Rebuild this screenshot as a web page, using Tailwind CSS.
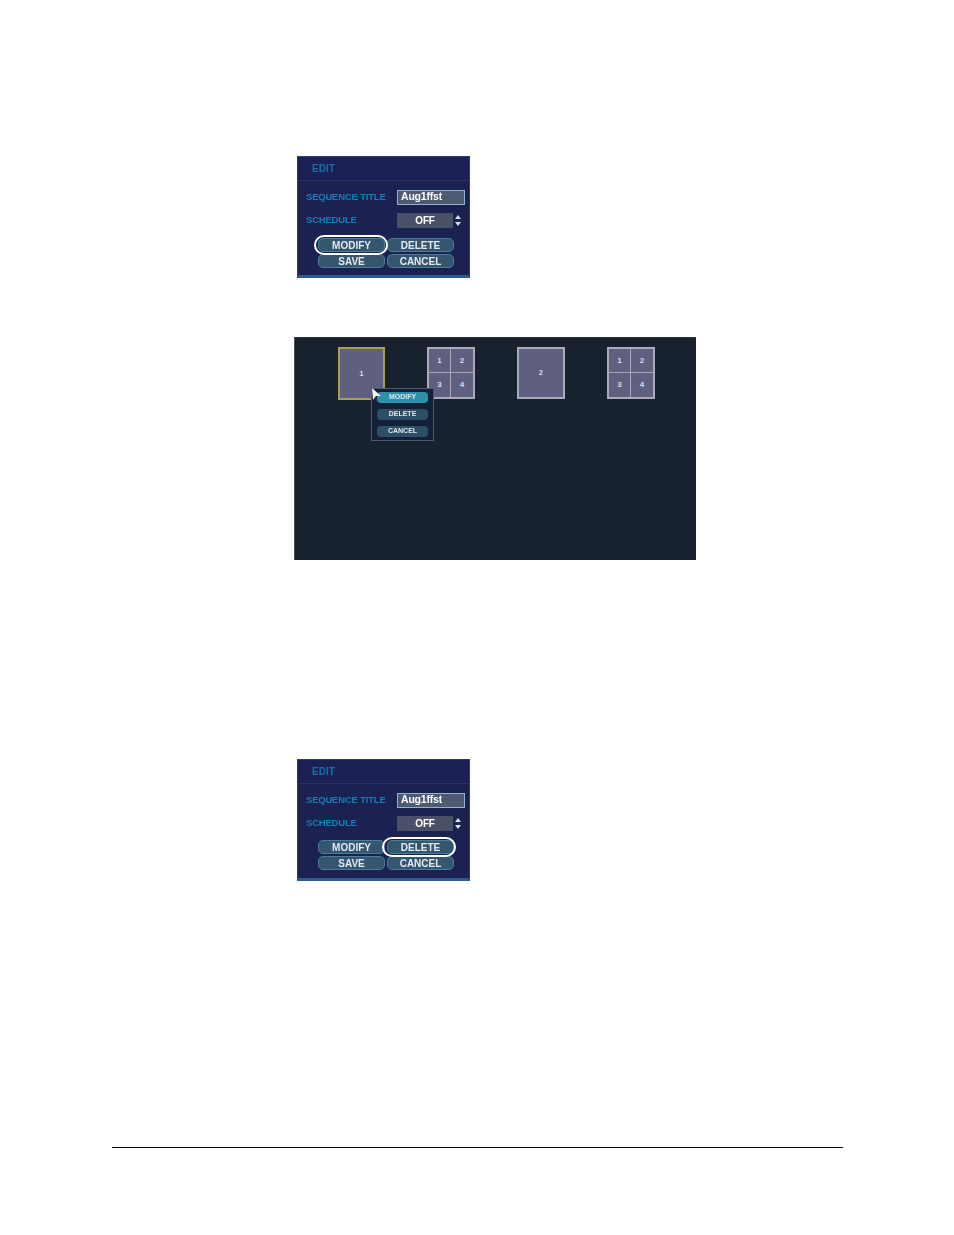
<!DOCTYPE html>
<html>
<head>
<meta charset="utf-8">
<script src="https://cdn.jsdelivr.net/npm/@tailwindcss/browser@4"></script>
</head>
<body class="bg-white">
<div class="w-[954px] h-[1235px] bg-white overflow-hidden pt-[156px] font-['Liberation_Sans',sans-serif]">

  <!-- EDIT dialog 1 -->
  <section class="relative ml-[297px] w-[173px] h-[122px] bg-[#1b2150] border border-[#2b3f74] border-b-[3px] border-b-[#2f5a8c] flex flex-col">
    <div class="h-[24px] pl-[14px] border-b border-[#2a3166] bg-[#1a1f55] flex items-center text-[10px] font-bold text-[#0f74a8] blur-[0.6px]">EDIT</div>
    <div class="mt-[7px] pl-[8px] h-[18px] flex items-center text-[9.5px] font-bold text-[#1280b8] whitespace-nowrap tracking-[-0.2px]">
      <span class="w-[91px] blur-[0.6px]">SEQUENCE TITLE</span>
      <span class="w-[68px] h-[15px] border border-[#8fb6c8] bg-[#4e5a70] text-white text-[10.5px] font-bold flex items-center pl-[3px] blur-[0.4px]">Aug1ffst</span>
    </div>
    <div class="mt-[5px] pl-[8px] h-[18px] flex items-center text-[9.5px] font-bold text-[#1280b8] tracking-[-0.2px]">
      <span class="w-[91px] blur-[0.6px]">SCHEDULE</span>
      <span class="w-[56px] h-[15px] bg-[#4a5068] text-white text-[10px] font-bold flex items-center justify-center blur-[0.4px]">OFF</span>
      <span class="ml-[1px] flex flex-col gap-[3px] w-[8px] items-center blur-[0.3px]">
        <svg width="6" height="4" viewBox="0 0 6 4"><path d="M3 0L6 4H0Z" fill="#d8e2ea"/></svg>
        <svg width="6" height="4" viewBox="0 0 6 4"><path d="M0 0H6L3 4Z" fill="#d8e2ea"/></svg>
      </span>
    </div>
    <div class="mt-[9px] ml-[20px] w-[136px] grid grid-cols-2 gap-x-[2px] gap-y-[2px] text-[10px] font-bold text-[#e4e8ee]">
      <span class="h-[14px] rounded-[5px] bg-[#35566f] border border-[#4d7c96] flex items-center justify-center blur-[0.5px]">MODIFY</span>
      <span class="h-[14px] rounded-[5px] bg-[#35566f] border border-[#4d7c96] flex items-center justify-center blur-[0.5px]">DELETE</span>
      <span class="h-[14px] rounded-[5px] bg-[#35566f] border border-[#4d7c96] flex items-center justify-center blur-[0.5px]">SAVE</span>
      <span class="h-[14px] rounded-[5px] bg-[#35566f] border border-[#4d7c96] flex items-center justify-center blur-[0.5px]">CANCEL</span>
    </div>
    <div class="absolute left-[16px] top-[78px] w-[74px] h-[20px] rounded-full border-2 border-white"></div>
  </section>

  <!-- Layout screen -->
  <section class="relative mt-[59px] ml-[294px] w-[402px] h-[223px] bg-[#18222f] border-t border-[#2a3646] border-l border-l-[#4a5460]">
    <div class="pt-[9px] pl-[43px] flex gap-[42px] text-[8px] font-bold text-[#dcdce4]">
      <div class="w-[47px] h-[53px] bg-[#5f5f80] border-2 border-[#a8a04e] flex items-center justify-center"><span class="blur-[0.4px]">1</span></div>
      <div class="w-[48px] h-[52px] bg-[#5f5f80] border-2 border-[#a9a9b8] grid grid-cols-2 grid-rows-2">
        <span class="flex items-center justify-center border-r border-b border-[#a9a9b8]">1</span>
        <span class="flex items-center justify-center border-b border-[#a9a9b8]">2</span>
        <span class="flex items-center justify-center border-r border-[#a9a9b8]">3</span>
        <span class="flex items-center justify-center">4</span>
      </div>
      <div class="w-[48px] h-[52px] bg-[#5f5f80] border-2 border-[#a9a9b8] flex items-center justify-center"><span class="blur-[0.4px]">2</span></div>
      <div class="w-[48px] h-[52px] bg-[#5f5f80] border-2 border-[#a9a9b8] grid grid-cols-2 grid-rows-2">
        <span class="flex items-center justify-center border-r border-b border-[#a9a9b8]">1</span>
        <span class="flex items-center justify-center border-b border-[#a9a9b8]">2</span>
        <span class="flex items-center justify-center border-r border-[#a9a9b8]">3</span>
        <span class="flex items-center justify-center">4</span>
      </div>
    </div>
    <!-- context menu -->
    <div class="absolute left-[76px] top-[50px] w-[63px] h-[53px] bg-[#142038] border border-[#4c5a70] flex flex-col items-center pt-[3px] gap-[6px] text-[7px] font-bold text-[#dfe6ee]">
      <span class="w-[51px] h-[11px] rounded-[4px] bg-[#2e8fa8] flex items-center justify-center blur-[0.4px]">MODIFY</span>
      <span class="w-[51px] h-[11px] rounded-[4px] bg-[#2d4f66] flex items-center justify-center blur-[0.4px]">DELETE</span>
      <span class="w-[51px] h-[11px] rounded-[4px] bg-[#2d4f66] flex items-center justify-center blur-[0.4px]">CANCEL</span>
    </div>
    <svg class="absolute left-[77px] top-[50px]" width="10" height="12" viewBox="0 0 10 12"><path d="M0 0L9 8H4L1 12Z" fill="#f2f4f8"/></svg>
  </section>

  <!-- EDIT dialog 2 -->
  <section class="relative mt-[199px] ml-[297px] w-[173px] h-[122px] bg-[#1b2150] border border-[#2b3f74] border-b-[3px] border-b-[#2f5a8c] flex flex-col">
    <div class="h-[24px] pl-[14px] border-b border-[#2a3166] bg-[#1a1f55] flex items-center text-[10px] font-bold text-[#0f74a8] blur-[0.6px]">EDIT</div>
    <div class="mt-[7px] pl-[8px] h-[18px] flex items-center text-[9.5px] font-bold text-[#1280b8] whitespace-nowrap tracking-[-0.2px]">
      <span class="w-[91px] blur-[0.6px]">SEQUENCE TITLE</span>
      <span class="w-[68px] h-[15px] border border-[#8fb6c8] bg-[#4e5a70] text-white text-[10.5px] font-bold flex items-center pl-[3px] blur-[0.4px]">Aug1ffst</span>
    </div>
    <div class="mt-[5px] pl-[8px] h-[18px] flex items-center text-[9.5px] font-bold text-[#1280b8] tracking-[-0.2px]">
      <span class="w-[91px] blur-[0.6px]">SCHEDULE</span>
      <span class="w-[56px] h-[15px] bg-[#4a5068] text-white text-[10px] font-bold flex items-center justify-center blur-[0.4px]">OFF</span>
      <span class="ml-[1px] flex flex-col gap-[3px] w-[8px] items-center blur-[0.3px]">
        <svg width="6" height="4" viewBox="0 0 6 4"><path d="M3 0L6 4H0Z" fill="#d8e2ea"/></svg>
        <svg width="6" height="4" viewBox="0 0 6 4"><path d="M0 0H6L3 4Z" fill="#d8e2ea"/></svg>
      </span>
    </div>
    <div class="mt-[8px] ml-[20px] w-[136px] grid grid-cols-2 gap-x-[2px] gap-y-[2px] text-[10px] font-bold text-[#e4e8ee]">
      <span class="h-[14px] rounded-[5px] bg-[#35566f] border border-[#4d7c96] flex items-center justify-center blur-[0.5px]">MODIFY</span>
      <span class="h-[14px] rounded-[5px] bg-[#35566f] border border-[#4d7c96] flex items-center justify-center blur-[0.5px]">DELETE</span>
      <span class="h-[14px] rounded-[5px] bg-[#35566f] border border-[#4d7c96] flex items-center justify-center blur-[0.5px]">SAVE</span>
      <span class="h-[14px] rounded-[5px] bg-[#35566f] border border-[#4d7c96] flex items-center justify-center blur-[0.5px]">CANCEL</span>
    </div>
    <div class="absolute left-[84px] top-[77px] w-[74px] h-[20px] rounded-full border-2 border-white"></div>
  </section>

  <!-- Footer rule -->
  <div class="mt-[266px] ml-[112px] w-[731px] h-px bg-black"></div>
</div>
</body>
</html>
